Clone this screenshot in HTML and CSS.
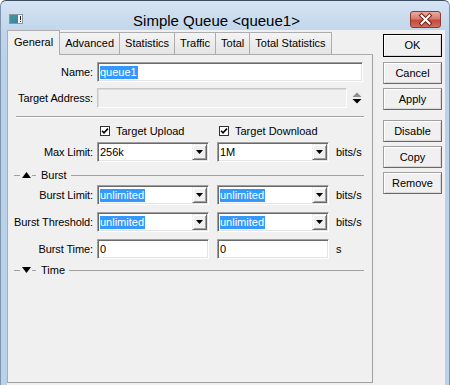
FILE: index.html
```html
<!DOCTYPE html>
<html>
<head>
<meta charset="utf-8">
<link rel="stylesheet" href="styles.css">
</head>
<body>
<div class="window">
  <div class="titlebar">
    <svg class="app-icon" width="14" height="10" viewBox="0 0 14 10">
      <defs><linearGradient id="ig" x1="0" y1="0" x2="1" y2="1"><stop offset="0" stop-color="#3f9a86"/><stop offset="1" stop-color="#3d7fb8"/></linearGradient></defs>
      <rect x="0.5" y="0.5" width="13" height="9" fill="#f4f4f4" stroke="#8a96a2"/>
      <rect x="1" y="1" width="8" height="8" fill="url(#ig)"/>
      <rect x="11" y="2" width="1" height="4" fill="#222"/>
      <rect x="11" y="7" width="1" height="1" fill="#222"/>
    </svg>
    <div class="title">Simple Queue &lt;queue1&gt;</div>
    <div class="close">
      <svg width="29" height="15" viewBox="0 0 29 15">
        <path d="M10.5 3.5 L18.5 11.5 M18.5 3.5 L10.5 11.5" stroke="#6e2119" stroke-width="4" stroke-linecap="square"/>
        <path d="M10.5 3.5 L18.5 11.5 M18.5 3.5 L10.5 11.5" stroke="#ffffff" stroke-width="2" stroke-linecap="square"/>
      </svg>
    </div>
  </div>
  <div class="client">
    <div class="left">
      <div class="tabs">
        <div class="tab active">General</div>
        <div class="tab">Advanced</div>
        <div class="tab">Statistics</div>
        <div class="tab">Traffic</div>
        <div class="tab">Total</div>
        <div class="tab">Total Statistics</div>
      </div>
      <div class="panel">
        <div class="row">
          <div class="lbl">Name:</div>
          <div class="field w-full"><span class="sel">queue1</span></div>
        </div>
        <div class="row gap6">
          <div class="lbl">Target Address:</div>
          <div class="field disabled w-ta"></div>
          <svg class="spin" width="10" height="12" viewBox="0 0 10 12">
            <path d="M0.5 5 L5 0.5 L9.5 5 Z" fill="#8c8c8c"/>
            <path d="M0.5 7 L9.5 7 L5 11.5 Z" fill="#000"/>
          </svg>
        </div>
        <div class="sep"></div>
        <div class="checks">
          <div class="check first">
            <svg width="10" height="10" viewBox="0 0 10 10"><rect x="0.5" y="0.5" width="9" height="9" fill="#fff" stroke="#333"/><path d="M2 4.8 L4 6.8 L8 2.6" stroke="#000" stroke-width="1.6" fill="none"/></svg>
            <span>Target Upload</span>
          </div>
          <div class="check">
            <svg width="10" height="10" viewBox="0 0 10 10"><rect x="0.5" y="0.5" width="9" height="9" fill="#fff" stroke="#333"/><path d="M2 4.8 L4 6.8 L8 2.6" stroke="#000" stroke-width="1.6" fill="none"/></svg>
            <span>Target Download</span>
          </div>
        </div>
        <div class="row gap3">
          <div class="lbl">Max Limit:</div>
          <div class="field combo w-half"><span class="val">256k</span><span class="arrow"><svg width="7" height="4" viewBox="0 0 7 4"><path d="M0 0 L7 0 L3.5 4 Z" fill="#000"/></svg></span></div>
          <div class="field combo w-half second"><span class="val">1M</span><span class="arrow"><svg width="7" height="4" viewBox="0 0 7 4"><path d="M0 0 L7 0 L3.5 4 Z" fill="#000"/></svg></span></div>
          <div class="unit">bits/s</div>
        </div>
        <div class="sect burst">
          <span class="ln lead"></span>
          <svg class="tri" width="9" height="6" viewBox="0 0 9 6"><path d="M0 6 L4.5 0 L9 6 Z" fill="#000"/></svg>
          <span class="ln short"></span>
          <span class="sect-title">Burst</span>
          <span class="ln fill"></span>
        </div>
        <div class="row gap4">
          <div class="lbl">Burst Limit:</div>
          <div class="field combo w-half"><span class="sel">unlimited</span><span class="val"></span><span class="arrow"><svg width="7" height="4" viewBox="0 0 7 4"><path d="M0 0 L7 0 L3.5 4 Z" fill="#000"/></svg></span></div>
          <div class="field combo w-half second"><span class="sel">unlimited</span><span class="val"></span><span class="arrow"><svg width="7" height="4" viewBox="0 0 7 4"><path d="M0 0 L7 0 L3.5 4 Z" fill="#000"/></svg></span></div>
          <div class="unit">bits/s</div>
        </div>
        <div class="row gap7">
          <div class="lbl">Burst Threshold:</div>
          <div class="field combo w-half"><span class="sel">unlimited</span><span class="val"></span><span class="arrow"><svg width="7" height="4" viewBox="0 0 7 4"><path d="M0 0 L7 0 L3.5 4 Z" fill="#000"/></svg></span></div>
          <div class="field combo w-half second"><span class="sel">unlimited</span><span class="val"></span><span class="arrow"><svg width="7" height="4" viewBox="0 0 7 4"><path d="M0 0 L7 0 L3.5 4 Z" fill="#000"/></svg></span></div>
          <div class="unit">bits/s</div>
        </div>
        <div class="row gap7">
          <div class="lbl">Burst Time:</div>
          <div class="field w-half"><span class="val">0</span></div>
          <div class="field w-half second"><span class="val">0</span></div>
          <div class="unit">s</div>
        </div>
        <div class="sect time">
          <span class="ln lead"></span>
          <svg class="tri" width="9" height="6" viewBox="0 0 9 6"><path d="M0 0 L9 0 L4.5 6 Z" fill="#000"/></svg>
          <span class="ln short"></span>
          <span class="sect-title">Time</span>
          <span class="ln fill"></span>
        </div>
      </div>
    </div>
    <div class="btns">
      <div class="btn ok">OK</div>
      <div class="btn cancel">Cancel</div>
      <div class="btn apply">Apply</div>
      <div class="btn disable">Disable</div>
      <div class="btn copy">Copy</div>
      <div class="btn remove">Remove</div>
    </div>
  </div>
</div>
</body>
</html>
```
FILE: styles.css
```css
html, body {
  margin: 0;
  padding: 0;
  background: #ffffff;
}
body {
  font-family: "Liberation Sans", Arial, sans-serif;
  font-size: 11px;
  color: #000;
}
.window {
  width: 450px;
  height: 385px;
  box-sizing: border-box;
  background: linear-gradient(#d6e4f3 0px, #c1d6ec 30px, #bad1ea 60px);
  border-top: 1px solid #3b4d61;
  border-left: 1px solid #7f95ad;
  border-right: 1px solid #7f95ad;
  border-radius: 6px 6px 0 0;
  display: flex;
  flex-direction: column;
  overflow: hidden;
}
.titlebar {
  height: 29px;
  display: flex;
  align-items: flex-start;
  flex: none;
}
.app-icon {
  margin: 13px 0 0 8px;
  flex: none;
}
.title {
  flex: 1;
  text-align: center;
  font-size: 15px;
  line-height: 17px;
  margin-top: 11px;
  color: #000;
}
.close {
  width: 31px;
  height: 17px;
  box-sizing: border-box;
  margin: 10px 8px 0 0;
  border: 1px solid #8b3b33;
  border-radius: 3px;
  background: linear-gradient(#e9aa9c 0%, #d77d6e 45%, #c34b3b 55%, #d26e5f 100%);
  display: flex;
  flex: none;
}
.client {
  flex: 1;
  display: flex;
  margin: 0 4px 0 6px;
  background: #f0f0f0;
}
.left {
  width: 366px;
  display: flex;
  flex-direction: column;
  flex: none;
}
.tabs {
  display: flex;
  align-items: flex-end;
  height: 25px;
  margin-bottom: -1px;
  position: relative;
  z-index: 1;
}
.tab {
  height: 21px;
  line-height: 21px;
  padding: 0 5px;
  border-top: 1px solid #adadad;
  border-right: 1px solid #adadad;
  background: linear-gradient(#f4f4f4, #e4e4e4);
  margin-bottom: 1px;
  white-space: nowrap;
}
.tab.active {
  height: 23px;
  line-height: 21px;
  padding: 1px 6px 0 6px;
  border-left: 1px solid #adadad;
  background: #f0f0f0;
  margin-bottom: 0;
}
.panel {
  height: 329px;
  box-sizing: border-box;
  border: 1px solid #adadad;
  border-right-color: #a0a0a0;
  border-bottom-color: #a0a0a0;
  padding: 7px 8px 0 0;
  display: flex;
  flex-direction: column;
}
.row {
  display: flex;
  align-items: center;
  height: 20px;
  flex: none;
}
.gap6 { margin-top: 6px; }
.gap3 { margin-top: 3px; }
.gap4 { margin-top: 4px; }
.gap7 { margin-top: 7px; }
.lbl {
  width: 89px;
  flex: none;
  box-sizing: border-box;
  text-align: right;
  padding-right: 4px;
  white-space: nowrap;
  letter-spacing: -0.1px;
}
.field {
  height: 20px;
  box-sizing: border-box;
  border: 1px solid;
  border-color: #a0a0a0 #ffffff #ffffff #a0a0a0;
  box-shadow: inset 1px 1px 0 #696969, inset -1px -1px 0 #e3e3e3;
  background: #fff;
  padding-left: 2px;
  display: flex;
  align-items: center;
  flex: none;
}
.field.disabled {
  background: #f0f0f0;
  border-color: #c8c8c8 #ffffff #ffffff #c8c8c8;
  box-shadow: inset 1px 1px 0 #dcdcdc;
}
.w-full { width: 266px; }
.w-ta { width: 250px; }
.w-half { width: 112px; }
.second { margin-left: 8px; }
.spin {
  margin-left: 5px;
  flex: none;
}
.sel {
  background: #3399ff;
  color: #fff;
  line-height: 13px;
  padding: 0 1px 0 0;
}
.val {
  flex: 1;
}
.combo {
  padding-right: 1px;
}
.combo .arrow {
  margin-left: auto;
  width: 15px;
  height: 16px;
  box-sizing: border-box;
  background: #f0f0f0;
  border: 1px solid;
  border-color: #f0f0f0 #696969 #696969 #f0f0f0;
  box-shadow: inset 1px 1px 0 #fff, inset -1px -1px 0 #a0a0a0;
  display: flex;
  align-items: center;
  justify-content: center;
  flex: none;
}
.unit {
  margin-left: 7px;
  white-space: nowrap;
}
.sep {
  margin: 8px 0 0 8px;
  height: 1px;
  background: #a0a0a0;
  border-bottom: 1px solid #fff;
  flex: none;
}
.checks {
  display: flex;
  align-items: center;
  height: 16px;
  margin-top: 5px;
  flex: none;
}
.check {
  display: flex;
  align-items: center;
}
.check span {
  margin-left: 6px;
}
.check.first {
  margin-left: 92px;
  width: 119px;
}
.sect {
  display: flex;
  align-items: center;
  height: 12px;
  flex: none;
}
.sect.burst { margin-top: 7px; }
.sect.time { margin-top: 5px; }
.ln {
  height: 1px;
  background: #a0a0a0;
}
.ln.lead {
  width: 6px;
  margin-left: 6px;
}
.tri {
  margin-left: 2px;
  flex: none;
}
.ln.short {
  width: 4px;
  margin-left: 1px;
}
.sect-title {
  margin-left: 5px;
}
.ln.fill {
  flex: 1;
  margin-left: 4px;
}
.btns {
  width: 59px;
  margin-left: 10px;
  padding-top: 4px;
  display: flex;
  flex-direction: column;
  flex: none;
}
.btn {
  height: 22px;
  box-sizing: border-box;
  border: 1px solid;
  border-color: #a0a0a0 #696969 #696969 #a0a0a0;
  box-shadow: inset 1px 1px 0 #fff, inset -1px -1px 0 #d8d8d8;
  background: #f0f0f0;
  text-align: center;
  line-height: 20px;
  white-space: nowrap;
}
.btn.ok {
  height: 23px;
  border-color: #000;
  line-height: 21px;
}
.btn.cancel { margin-top: 5px; }
.btn.apply { margin-top: 4px; }
.btn.disable { margin-top: 10px; }
.btn.copy { margin-top: 4px; }
.btn.remove { margin-top: 4px; }
```
